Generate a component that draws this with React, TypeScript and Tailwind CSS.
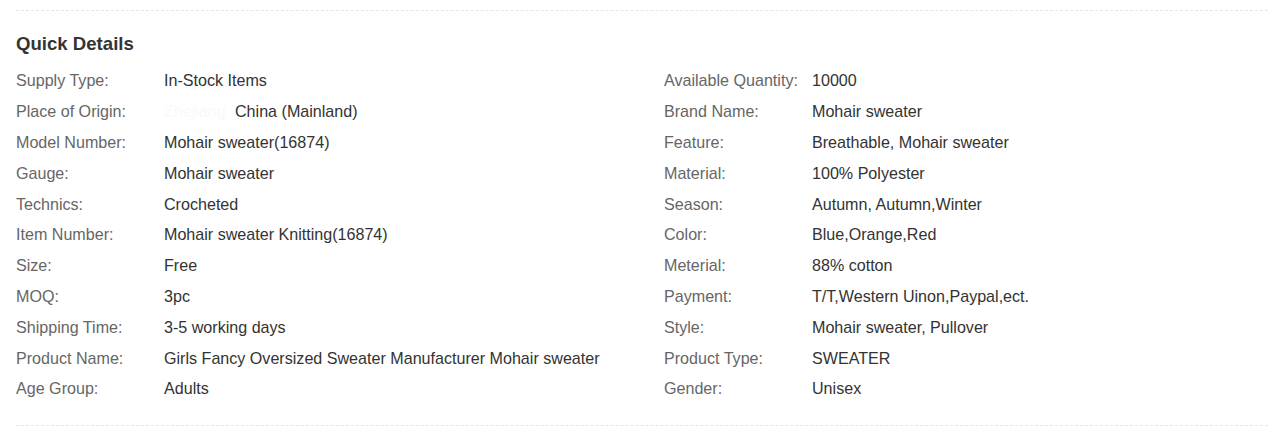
const left: [string, string][] = [
  ["Supply Type:", "In-Stock Items"],
  ["Place of Origin:", "China (Mainland)"],
  ["Model Number:", "Mohair sweater(16874)"],
  ["Gauge:", "Mohair sweater"],
  ["Technics:", "Crocheted"],
  ["Item Number:", "Mohair sweater Knitting(16874)"],
  ["Size:", "Free"],
  ["MOQ:", "3pc"],
  ["Shipping Time:", "3-5 working days"],
  ["Product Name:", "Girls Fancy Oversized Sweater Manufacturer Mohair sweater"],
  ["Age Group:", "Adults"],
];

const right: [string, string][] = [
  ["Available Quantity:", "10000"],
  ["Brand Name:", "Mohair sweater"],
  ["Feature:", "Breathable, Mohair sweater"],
  ["Material:", "100% Polyester"],
  ["Season:", "Autumn, Autumn,Winter"],
  ["Color:", "Blue,Orange,Red"],
  ["Meterial:", "88% cotton"],
  ["Payment:", "T/T,Western Uinon,Paypal,ect."],
  ["Style:", "Mohair sweater, Pullover"],
  ["Product Type:", "SWEATER"],
  ["Gender:", "Unisex"],
];

function Row({ label, value }: { label: string; value: string }) {
  return (
    <div className="flex h-[30.8px] items-center">
      <div className="w-[148px] shrink-0 text-[#666]">{label}</div>
      <div className="text-[#333]">
        {value === "China (Mainland)" && (
          <span className="inline-block w-[71px] text-[#f9f9f9]">Zhejiang</span>
        )}
        {value}
      </div>
    </div>
  );
}

export default function App() {
  return (
    <div
      className="bg-white px-4 pt-[10px] w-[1285px]"
      style={{ fontFamily: '"Liberation Sans", Arial, sans-serif' }}
    >
      <div className="w-[1252px] border-t border-dashed border-[#e6e6e6]">
        <h3 className="mt-[22px] text-[18.6px] font-bold leading-[22px] text-[#333]">Quick Details</h3>
        <div className="mt-[10px] grid grid-cols-[648px_1fr] text-[16.1px] pb-[21px]">
          <div>
            {left.map(([l, v]) => (
              <Row key={l} label={l} value={v} />
            ))}
          </div>
          <div>
            {right.map(([l, v]) => (
              <Row key={l} label={l} value={v} />
            ))}
          </div>
        </div>
      </div>
      <div className="w-[1252px] border-t border-dashed border-[#e6e6e6]" />
    </div>
  );
}
